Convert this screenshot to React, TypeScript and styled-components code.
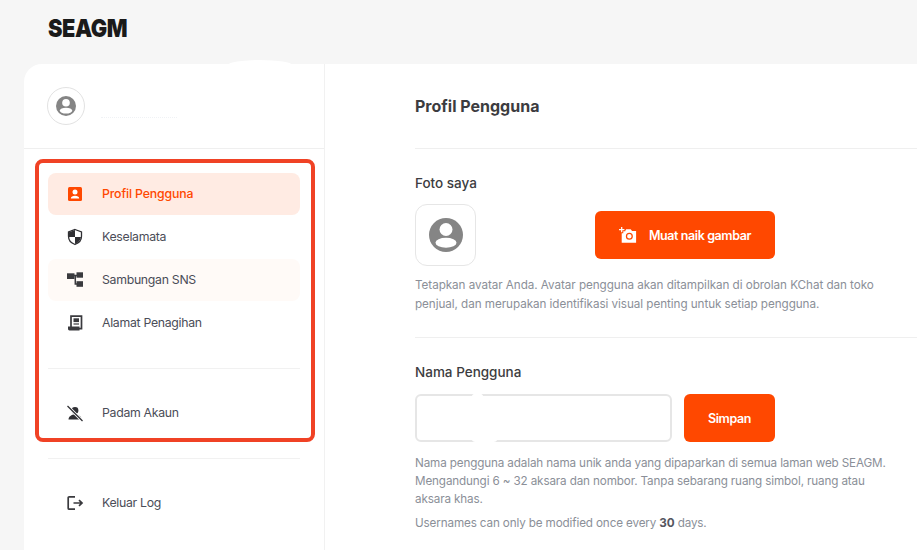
import styled, { createGlobalStyle } from "styled-components";

const GlobalStyle = createGlobalStyle`
  html, body {
    margin: 0;
    height: 100%;
    overflow: hidden;
    background-color: #f6f6f6;
    font-family: "Inter", "Noto Sans", sans-serif;
  }
  * {
    box-sizing: border-box;
  }
`;

const Page = styled.div`
  width: 917px;
  height: 550px;
  overflow: hidden;

  display: flex;
  flex-direction: column;
`;
const Header = styled.header`
  height: 64px;
  flex-shrink: 0;

  display: flex;
  align-items: center;

  padding-left: 48px;
  padding-bottom: 8px;
`;
const Logo = styled.span`
  font-weight: 900;
  font-size: 25px;
  line-height: 1;
  letter-spacing: -0.5px;
  color: #1a1a1a;
  transform: scaleX(0.87);
  transform-origin: left center;
`;
const Body = styled.div`
  flex-grow: 1;

  display: flex;

  margin-left: 24px;
  background-color: #fff;
  border-top-left-radius: 18px;
  position: relative;
`;
const Bump = styled.div`
  position: absolute;
  left: 204px;
  top: -4px;
  width: 64px;
  height: 10px;
  border-radius: 50%;
  background-color: #fff;
`;
const Sidebar = styled.aside`
  width: 301px;
  flex-shrink: 0;

  display: flex;
  flex-direction: column;

  border-right: 1px solid #f1f1f1;
`;
const UserRow = styled.div`
  height: 85px;
  flex-shrink: 0;

  display: flex;
  align-items: center;
  gap: 16px;

  padding: 0 23px;
  border-bottom: 1px solid #efefef;
`;
const UserAvatar = styled.div`
  width: 38px;
  height: 38px;

  display: flex;
  align-items: center;
  justify-content: center;

  border: 1px solid #e2e2e2;
  border-radius: 50%;
`;
const MaskedName = styled.div`
  width: 76px;
  margin-top: 22px;
  border-bottom: 1px dotted #f0f2f5;
`;
const Highlight = styled.div`
  margin: 10px 9px 0 11px;
  height: 283px;
  padding: 10px 11px 0 9px;

  display: flex;
  flex-direction: column;

  border: 4px solid #f04225;
  border-radius: 8px;
`;
const MenuList = styled.div`
  display: flex;
  flex-direction: column;
  gap: 1px;
`;
const MenuItem = styled.div<{ $tone?: "active" | "soft" }>`
  height: 42px;
  flex-shrink: 0;

  display: flex;
  align-items: center;

  padding-left: 18px;
  padding-bottom: 1px;
  border-radius: 8px;
  font-size: 12.3px;
  font-weight: ${(p) => (p.$tone === "active" ? 500 : 400)};
  letter-spacing: ${(p) => (p.$tone === "active" ? "-0.15px" : "-0.3px")};
  color: ${(p) => (p.$tone === "active" ? "#ff4800" : "#4b4d58")};
  background-color: ${(p) =>
    p.$tone === "active"
      ? "#ffebe3"
      : p.$tone === "soft"
        ? "#fffaf7"
        : "transparent"};

  svg {
    width: 18px;
    height: 18px;
    margin-right: 18px;
    flex-shrink: 0;
  }
`;
const MenuDivider = styled.div`
  height: 1px;
  flex-shrink: 0;
  margin-top: 24px;
  margin-bottom: 23px;
  background-color: #f1f1f1;
`;
const BottomDivider = styled(MenuDivider)`
  margin: 16px 24px 23px;
`;
const BottomItem = styled(MenuItem)`
  margin: 0 24px;
`;
const Main = styled.main`
  flex-grow: 1;
  min-width: 0;
  padding-left: 90px;

  display: flex;
  flex-direction: column;
`;
const Title = styled.h1`
  height: 85px;
  margin: 0;

  display: flex;
  align-items: center;

  padding-bottom: 1px;
  border-bottom: 1px solid #efefef;
  font-size: 16px;
  font-weight: 700;
  color: #3c3c40;
`;
const Section = styled.section`
  padding-top: 26px;
  height: 189px;
  border-bottom: 1px solid #efefef;
`;
const LastSection = styled.section`
  padding-top: 26px;
`;
const Label = styled.h2`
  margin: 0 0 12px;
  font-size: 13.5px;
  line-height: 17px;
  font-weight: 500;
  color: #3c3c40;
`;
const PhotoRow = styled.div`
  display: flex;
  align-items: center;
  gap: 119px;
`;
const PhotoBox = styled.div`
  width: 61px;
  height: 62px;

  display: flex;
  align-items: center;
  justify-content: center;

  border: 1px solid #e6e6e6;
  border-radius: 12px;
`;
const ActionButton = styled.button<{ $width: number }>`
  width: ${(p) => p.$width}px;
  height: 48px;
  padding: 0;

  display: flex;
  align-items: center;
  justify-content: center;
  gap: 12px;

  border: 0;
  border-radius: 6px;
  background-color: #ff4800;
  color: #fff;
  font-family: inherit;
  font-size: 12.5px;
  font-weight: 600;
  letter-spacing: -0.4px;
`;
const Hint = styled.p`
  margin: 10px 0 0;
  font-size: 11.7px;
  line-height: 19px;
  letter-spacing: -0.06px;
  color: #8b8f98;
  white-space: nowrap;
`;
const InputRow = styled.div`
  display: flex;
  gap: 12px;
  padding-top: 1px;
`;
const NameInput = styled.div`
  width: 257px;
  height: 48px;
  border: 2px solid #e6e6e6;
  border-radius: 6px;
  background-color: #fff;
  position: relative;

  /* white smudges over the border, where the name was masked */
  &::before {
    content: "";
    position: absolute;
    left: 55px;
    top: -3px;
    width: 11px;
    height: 6px;
    border-radius: 50%;
    background-color: #fff;
  }
  &::after {
    content: "";
    position: absolute;
    left: 55px;
    bottom: -3px;
    width: 25px;
    height: 6px;
    border-radius: 50%;
    background-color: #fff;
  }
`;
const HintSmall = styled.p<{ $gap: number }>`
  margin: ${(p) => p.$gap}px 0 0;
  font-size: 11.7px;
  line-height: 18px;
  letter-spacing: -0.14px;
  color: #8b8f98;
  white-space: nowrap;

  b {
    font-weight: 700;
    color: #55575f;
  }
`;

const PersonCircle = ({ size }: { size: number }) => (
  <svg width={size} height={size} viewBox="0 0 34 34">
    <circle cx="17" cy="17" r="17" fill="#858585" />
    <circle cx="17" cy="11.500" r="6.500" fill="#fff" />
    <ellipse cx="17" cy="24.800" rx="10.500" ry="5" fill="#fff" />
  </svg>
);

const ProfileIcon = () => (
  <svg viewBox="0 0 18 18">
    <rect x="2" y="2" width="14" height="14" rx="1.500" fill="#ff4800" />
    <circle cx="9" cy="7" r="2.500" fill="#fff" />
    <path d="M4.800 13.500c0-1.900 1.900-2.800 4.200-2.800s4.200.9 4.200 2.800z" fill="#fff" />
  </svg>
);

const ShieldIcon = () => (
  <svg viewBox="0 0 18 18">
    <path
      d="M9 1.500l6.500 2.400v4.400c0 4-2.700 6.900-6.500 8.200-3.800-1.300-6.500-4.200-6.500-8.200V3.900z"
      fill="none"
      stroke="#2f2f33"
      strokeWidth="1.300"
    />
    <path d="M9 2v7H3v-.7-4zM9 9h6c-.3 3.400-2.700 5.800-6 7z" fill="#2f2f33" />
  </svg>
);

const TreeIcon = () => (
  <svg viewBox="0 0 18 18">
    <rect x="1" y="2.300" width="7.500" height="5.700" fill="#3a3a3e" />
    <rect x="10.500" y="1.300" width="6.500" height="5.400" fill="#3a3a3e" />
    <rect x="10.500" y="10.200" width="6.500" height="5.600" fill="#3a3a3e" />
    <path d="M8 4.500h3M9.300 4.500v8.500h2" fill="none" stroke="#3a3a3e" strokeWidth="1.500" />
  </svg>
);

const BillIcon = () => (
  <svg viewBox="0 0 18 18">
    <path
      d="M5 2.200h10.500v12.500H5z"
      fill="none"
      stroke="#3a3a3e"
      strokeWidth="1.700"
    />
    <rect x="7.500" y="4.300" width="5.500" height="3.800" fill="#3a3a3e" />
    <path d="M7.500 10h5.500" stroke="#3a3a3e" strokeWidth="1.200" />
    <path d="M2 12.500h11.500v4H3.500c-1 0-1.500-.8-1.500-1.700z" fill="#3a3a3e" />
  </svg>
);

const UserOffIcon = () => (
  <svg viewBox="0 0 18 18">
    <circle cx="9" cy="6.500" r="3.400" fill="#2f2f33" />
    <path d="M2.500 15.500c0-3 3-5 6.500-5s6.500 2 6.500 5z" fill="#2f2f33" />
    <path d="M1.500 2l15 15" stroke="#fff" strokeWidth="3" />
    <path d="M1.500 2l15 15" stroke="#2f2f33" strokeWidth="1.300" />
  </svg>
);

const LogoutIcon = () => (
  <svg viewBox="0 0 18 18" fill="none" stroke="#3a3a3e" strokeWidth="1.700">
    <path d="M9 2.800H3.200a1 1 0 0 0-1 1v10.400a1 1 0 0 0 1 1H9" />
    <path d="M7.500 9h8.500M13 6.200L16 9l-3 2.800" />
  </svg>
);

const CameraIcon = () => (
  <svg width="18" height="18" viewBox="0 0 20 20">
    <path d="M3 5.500h3.500l1.500-2h5l1.500 2H19v13H3z" fill="#fff" />
    <circle cx="11.500" cy="11.500" r="3.200" fill="none" stroke="#ff4800" strokeWidth="1.400" />
    <path d="M3 1v7M0 4h7" stroke="#ff4800" strokeWidth="3.500" />
    <path d="M3 1v6M0 4h6" stroke="#fff" strokeWidth="1.400" />
  </svg>
);

const App = () => {
  return (
    <Page>
      <GlobalStyle />
      <Header>
        <Logo>SEAGM</Logo>
      </Header>
      <Body>
        <Bump />
        <Sidebar>
          <UserRow>
            <UserAvatar>
              <PersonCircle size={20} />
            </UserAvatar>
            <MaskedName />
          </UserRow>
          <Highlight>
            <MenuList>
              <MenuItem $tone="active">
                <ProfileIcon />
                Profil Pengguna
              </MenuItem>
              <MenuItem>
                <ShieldIcon />
                Keselamata
              </MenuItem>
              <MenuItem $tone="soft">
                <TreeIcon />
                Sambungan SNS
              </MenuItem>
              <MenuItem>
                <BillIcon />
                Alamat Penagihan
              </MenuItem>
            </MenuList>
            <MenuDivider />
            <MenuItem>
              <UserOffIcon />
              Padam Akaun
            </MenuItem>
          </Highlight>
          <BottomDivider />
          <BottomItem>
            <LogoutIcon />
            Keluar Log
          </BottomItem>
        </Sidebar>
        <Main>
          <Title>Profil Pengguna</Title>
          <Section>
            <Label>Foto saya</Label>
            <PhotoRow>
              <PhotoBox>
                <PersonCircle size={34} />
              </PhotoBox>
              <ActionButton $width={180}>
                <CameraIcon />
                Muat naik gambar
              </ActionButton>
            </PhotoRow>
            <Hint>
              Tetapkan avatar Anda. Avatar pengguna akan ditampilkan di obrolan KChat dan toko
              <br />
              penjual, dan merupakan identifikasi visual penting untuk setiap pengguna.
            </Hint>
          </Section>
          <LastSection>
            <Label>Nama Pengguna</Label>
            <InputRow>
              <NameInput />
              <ActionButton $width={91}>Simpan</ActionButton>
            </InputRow>
            <HintSmall $gap={12}>
              Nama pengguna adalah nama unik anda yang dipaparkan di semua laman web SEAGM.
              <br />
              Mengandungi 6 ~ 32 aksara dan nombor. Tanpa sebarang ruang simbol, ruang atau
              <br />
              aksara khas.
            </HintSmall>
            <HintSmall $gap={6}>
              Usernames can only be modified once every <b>30</b> days.
            </HintSmall>
          </LastSection>
        </Main>
      </Body>
    </Page>
  );
};

export default App;
